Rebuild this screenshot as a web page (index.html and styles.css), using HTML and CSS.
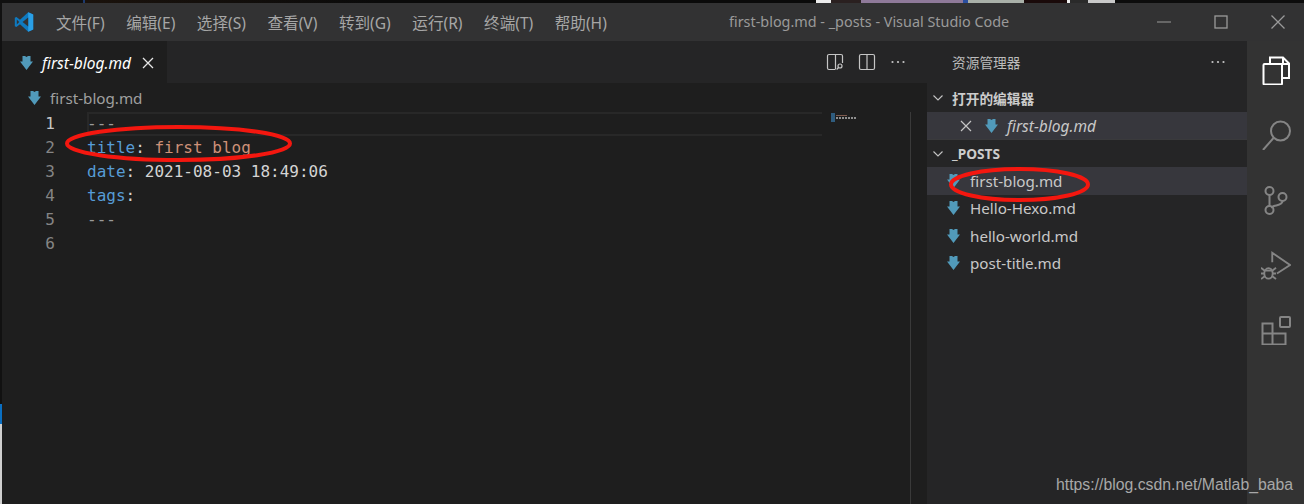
FILE: index.html
```html
<!DOCTYPE html>
<html lang="zh">
<head>
<meta charset="utf-8">
<title>first-blog.md - _posts - Visual Studio Code</title>
<link rel="stylesheet" href="styles.css">
</head>
<body>
<svg class="defs" width="0" height="0" aria-hidden="true">
  <symbol id="md" viewBox="0 0 13 14"><path d="M2.500 0H5l1.500 1L8 0h2.500v5.500H13L6.500 14 0 5.500h2.500z" fill="#519aba"/></symbol>
  <symbol id="chev" viewBox="0 0 12 12"><path d="M1.500 3.500 6 8l4.500-4.500" fill="none" stroke="#c5c5c5" stroke-width="1.100"/></symbol>
  <symbol id="dots" viewBox="0 0 16 4"><circle cx="2.500" cy="2" r="1.100"/><circle cx="8" cy="2" r="1.100"/><circle cx="13.500" cy="2" r="1.100"/></symbol>
</svg>
<div class="backdrop">
  <span class="b b-black1"></span><span class="b b-blue"></span><span class="b b-black2"></span>
  <span class="b b-white"></span><span class="b b-dark"></span><span class="b b-pic"></span><span class="b b-picblue"></span><span class="b b-grey"></span>
  <span class="b b-time"></span><span class="b b-white2"></span><span class="b b-gap"></span><span class="b b-light"></span><span class="b b-fill"></span>
</div>
<div class="app">
  <div class="edge"><span class="edge-top"></span><span class="edge-blue"></span><span class="edge-grey"></span></div>
  <div class="window">
    <header class="titlebar">
      <svg class="logo" viewBox="0 0 100 100" aria-hidden="true">
        <path d="M71 99 96 87V13L71 1 30 39 12 25 4 29v42l8 4 18-14z" fill="#0f7ac0"/>
        <path d="M71 99 96 87V13L71 1z" fill="#2a9fe6"/>
        <path d="M71 27 43 50l28 23z" fill="#323233"/>
        <path d="M14 37 26 50 14 63z" fill="#323233"/>
      </svg>
      <nav class="menu">
        <span>文件(F)</span><span>编辑(E)</span><span>选择(S)</span><span>查看(V)</span><span>转到(G)</span><span>运行(R)</span><span>终端(T)</span><span>帮助(H)</span>
      </nav>
      <div class="wintitle">first-blog.md - _posts - Visual Studio Code</div>
      <div class="winbtns">
        <svg viewBox="0 0 14 14"><path d="M0 7h14" stroke="#9a9a9a" stroke-width="1"/></svg>
        <svg viewBox="0 0 14 14"><rect x="1" y="1" width="12" height="12" fill="none" stroke="#9a9a9a" stroke-width="1.300"/></svg>
        <svg viewBox="0 0 14 14"><path d="M0.500 0.500l13 13M13.500 0.500l-13 13" stroke="#9a9a9a" stroke-width="1.300"/></svg>
      </div>
    </header>
    <div class="body">
      <main class="editor">
        <div class="tabbar">
          <div class="tab">
            <svg class="mdicon"><use href="#md"/></svg>
            <span class="tabname">first-blog.md</span>
            <svg class="tabx" viewBox="0 0 12 12"><path d="M1 1l10 10M11 1 1 11" stroke="#e6e6e6" stroke-width="1.300"/></svg>
          </div>
          <div class="tabactions">
            <svg class="act" viewBox="0 0 18 18" fill="none" stroke="#c5c5c5" stroke-width="1.200"><path d="M9 16.500H3a1.500 1.500 0 0 1-1.500-1.500V3A1.500 1.500 0 0 1 3 1.500h12A1.500 1.500 0 0 1 16.500 3v7M9.500 1.500v15"/><circle cx="14" cy="13" r="2"/><path d="M12.500 14.500l-1.800 2"/></svg>
            <svg class="act" viewBox="0 0 18 18" fill="none" stroke="#c5c5c5" stroke-width="1.200"><rect x="1.500" y="1.500" width="15" height="15" rx="1.500"/><path d="M9 1.500v15"/></svg>
            <svg class="dots"><use href="#dots"/></svg>
          </div>
        </div>
        <div class="crumbs"><svg class="mdicon"><use href="#md"/></svg><span>first-blog.md</span></div>
        <div class="code">
          <div class="gutter">
            <div class="ln ln-cur">1</div><div class="ln">2</div><div class="ln">3</div><div class="ln">4</div><div class="ln">5</div><div class="ln">6</div>
          </div>
          <div class="lines">
            <div class="line line-cur"><span class="dash">---</span></div>
            <div class="line"><span class="key">title</span><span class="pun">:</span> <span class="str">first blog</span></div>
            <div class="line"><span class="key">date</span><span class="pun">:</span> <span class="val">2021-08-03 18:49:06</span></div>
            <div class="line"><span class="key">tags</span><span class="pun">:</span></div>
            <div class="line"><span class="dash">---</span></div>
          </div>
          <div class="minimap">
            <span class="mm-bar"></span>
            <span class="mm-text"><i class="mm-a"></i><i class="mm-b"></i></span>
          </div>
          <div class="scrolltrack"></div>
        </div>
      </main>
      <aside class="sidebar">
        <div class="sidehead"><span>资源管理器</span><svg class="dots"><use href="#dots"/></svg></div>
        <div class="sechead sechead-first"><svg class="chev"><use href="#chev"/></svg><b>打开的编辑器</b></div>
        <div class="row row-open row-active">
          <svg class="rowx" viewBox="0 0 12 12"><path d="M1 1l10 10M11 1 1 11" stroke="#c5c5c5" stroke-width="1.200"/></svg>
          <svg class="mdicon"><use href="#md"/></svg>
          <span class="ital">first-blog.md</span>
        </div>
        <div class="sechead sechead-line"><svg class="chev"><use href="#chev"/></svg><b>_POSTS</b></div>
        <div class="row row-active"><svg class="mdicon"><use href="#md"/></svg><span>first-blog.md</span></div>
        <div class="row"><svg class="mdicon"><use href="#md"/></svg><span>Hello-Hexo.md</span></div>
        <div class="row"><svg class="mdicon"><use href="#md"/></svg><span>hello-world.md</span></div>
        <div class="row"><svg class="mdicon"><use href="#md"/></svg><span>post-title.md</span></div>
      </aside>
      <nav class="activity">
        <svg viewBox="0 0 30 30" fill="none" stroke="#ffffff" stroke-width="2"><path d="M9 8V2.500h13l6 6V23h-6"/><path d="M22 3v6h6"/><path d="M3.500 9H21v19.500a1 1 0 0 1-1 1H3.500a1 1 0 0 1-1-1V10a1 1 0 0 1 1-1z"/></svg>
        <svg viewBox="0 0 30 30" fill="none" stroke="#858585" stroke-width="2"><circle cx="19.500" cy="11" r="9.500"/><path d="M12.500 18 2 30"/></svg>
        <svg viewBox="0 0 30 30" fill="none" stroke="#858585" stroke-width="2"><circle cx="8.500" cy="6" r="4"/><circle cx="8.500" cy="25" r="4"/><circle cx="21.500" cy="12" r="4"/><path d="M8.500 10v11M21.500 16c0 4-5 4-8.500 5l-3 1.500"/></svg>
        <svg viewBox="0 0 32 30" fill="none" stroke="#858585" stroke-width="2"><path d="M12 12V2l19 13-14 9"/><ellipse cx="8" cy="24" rx="4.500" ry="5.500"/><path d="M0 18l4 3M0 24h3.500M0 30l4-3M16 18l-4 3M16 24h-3.500M16 30l-4-3M3.500 21h9"/></svg>
        <svg viewBox="0 0 30 30" fill="none" stroke="#858585" stroke-width="2"><rect x="19" y="2" width="10" height="10" rx="1"/><path d="M1.500 8.500h10v10h13v11h-23zM1.500 18.500h10v11"/></svg>
      </nav>
    </div>
  </div>
</div>
<svg class="marks" viewBox="0 0 1304 504" aria-hidden="true">
  <ellipse cx="178.500" cy="143.500" rx="111.500" ry="16.500"/>
  <ellipse cx="1019.500" cy="184.500" rx="68.500" ry="15.500"/>
</svg>
<div class="watermark">https://blog.csdn.net/Matlab_baba</div>
</body>
</html>
```
FILE: styles.css
```css
* { box-sizing: border-box; }
html, body { margin: 0; padding: 0; height: 504px; overflow: hidden; background: #1e1e1e; }
body {
  width: 1304px;
  position: relative;
  font-family: "Noto Sans", "Noto Sans CJK SC", sans-serif;
  font-size: 15.200px;
  color: #ccc;
  display: flex;
  flex-direction: column;
}
.defs { position: absolute; }
svg { display: block; flex: none; }

.backdrop { height: 3px; display: flex; flex: none; background: #0c0c0c; }
.b { display: block; height: 3px; flex: none; }
.b-black1 { width: 83px; background: #101010; }
.b-blue { width: 2px; background: #1d3a6e; }
.b-black2 { width: 731px; background: linear-gradient(90deg, #1a120c, #0a0a0a 40%); }
.b-white { width: 15px; background: #ececec; }
.b-dark { width: 30px; background: #2a2020; }
.b-pic { width: 102px; background: #8f7a9a; }
.b-picblue { width: 5px; background: #2a4fa0; }
.b-grey { width: 56px; background: #a9b0a8; }
.b-time { width: 43px; background: #1a0a0a; }
.b-white2 { width: 3px; background: #eee; }
.b-gap { width: 18px; background: #2a2a2a; }
.b-light { width: 27px; background: #c9c9c9; }
.b-fill { flex: 1; background: #0c0c0c; }

.app { flex: 1; display: flex; min-height: 0; }
.edge { width: 2px; flex: none; display: flex; flex-direction: column; }
.edge-top { height: 401px; background: #111; }
.edge-blue { height: 20px; background: #0a6fc2; }
.edge-grey { flex: 1; background: #cfcfcf; }
.window { flex: 1; display: flex; flex-direction: column; min-width: 0; }

.titlebar {
  height: 38px;
  flex: none;
  background: #323233;
  display: flex;
  align-items: center;
  position: relative;
  color: #a6a6a6;
  padding-left: 12px;
}
.logo { width: 20px; height: 20px; margin-right: 22px; }
.menu { display: flex; gap: 21.500px; font-size: 15.600px; }
.menu span { white-space: nowrap; }
.wintitle {
  position: absolute;
  left: 727px;
  top: 9px;
  font-size: 14.400px;
  line-height: 20px;
  white-space: nowrap;
  color: #9a9a9a;
}
.winbtns { margin-left: auto; display: flex; gap: 43px; padding-right: 19px; }
.winbtns svg { width: 14px; height: 14px; }

.body { flex: 1; display: flex; min-height: 0; }
.editor { width: 925px; flex: none; display: flex; flex-direction: column; background: #1e1e1e; }
.tabbar { height: 42px; flex: none; background: #252526; display: flex; align-items: stretch; }
.tab {
  width: 165px;
  background: #1e1e1e;
  display: flex;
  align-items: center;
  padding: 2px 0 0 18px;
  color: #fff;
}
.mdicon { width: 13px; height: 14px; }
.tabname { font-style: italic; margin-left: 9px; font-size: 15.500px; white-space: nowrap; }
.tabx { width: 12px; height: 12px; margin-left: 11px; }
.tabactions { margin-left: auto; display: flex; align-items: center; gap: 14px; padding-right: 21px; }
.act { width: 18px; height: 18px; }
.dots { width: 16px; height: 4px; fill: #c5c5c5; }

.crumbs { height: 28px; flex: none; display: flex; align-items: center; gap: 9px; padding: 1px 0 0 26px; color: #a0a0a0; font-size: 15.200px; }
.code { flex: 1; display: flex; min-height: 0; padding-top: 1px; font-family: "DejaVu Sans Mono", "Liberation Mono", monospace; font-size: 16px; line-height: 24px; }
.gutter { width: 85px; flex: none; padding-right: 32px; text-align: right; color: #858585; }
.ln { height: 24px; }
.ln-cur { color: #c6c6c6; }
.lines { width: 735px; flex: none; color: #d4d4d4; }
.line { height: 24px; white-space: pre; font-size: 16px; }
.line-cur { box-shadow: inset 0 2px 0 #282828, inset 0 -2px 0 #282828, inset 2px 0 0 #282828; }
.key { color: #569cd6; }
.pun { color: #d4d4d4; }
.str { color: #ce9178; }
.val { color: #d4d4d4; }
.dash { color: #9a9a9a; }
.minimap { width: 88px; flex: none; display: flex; gap: 1px; padding: 1px 0 0 9px; align-items: flex-start; }
.mm-bar { width: 4px; height: 9px; background: #2f5c7e; }
.mm-text { display: block; width: 20px; margin-top: 2px; }
.mm-a { display: block; width: 11px; height: 1px; background: #7e5a4d; margin-bottom: 1px; }
.mm-b { display: block; width: 20px; height: 2px; background: repeating-linear-gradient(90deg, #8f8f8f 0 2px, #1e1e1e 2px 3px); }
.scrolltrack { flex: 1; border-left: 1px solid #3a3a3a; }

.sidebar { width: 320px; flex: none; background: #252526; font-size: 15.200px; }
.sidehead { height: 44px; display: flex; align-items: center; justify-content: space-between; padding: 0 21px 2px 25px; font-size: 13.700px; color: #bbb; }
.sechead { height: 27px; display: flex; align-items: center; padding-left: 5px; gap: 8px; font-size: 13.700px; color: #ccc; }
.sechead b { font-weight: 700; }
.sechead-first { padding-bottom: 2px; }
.sechead-line { height: 28px; border-top: 1px solid #3a3a3c; }
.chev { width: 12px; height: 12px; }
.row { height: 27.500px; display: flex; align-items: center; gap: 10px; padding-left: 20px; color: #c8c8c8; }
.row-active { background: #37373d; }
.row-open { height: 27px; padding-left: 33px; gap: 0; }
.rowx { width: 12px; height: 12px; margin-right: 13px; }
.ital { font-style: italic; margin-left: 9px; font-size: 15.500px; }

.activity { flex: 1; background: #333333; display: flex; flex-direction: column; align-items: center; padding-top: 14px; gap: 35px; }
.activity svg { width: 30px; height: 30px; }

.marks { position: absolute; left: 0; top: 0; width: 1304px; height: 504px; fill: none; stroke: #f4170f; stroke-width: 4; pointer-events: none; }
.watermark { position: absolute; left: 1056px; top: 475px; font-family: "Liberation Sans", sans-serif; font-size: 15.800px; line-height: 20px; color: #a8a8a8; white-space: nowrap; }
```
